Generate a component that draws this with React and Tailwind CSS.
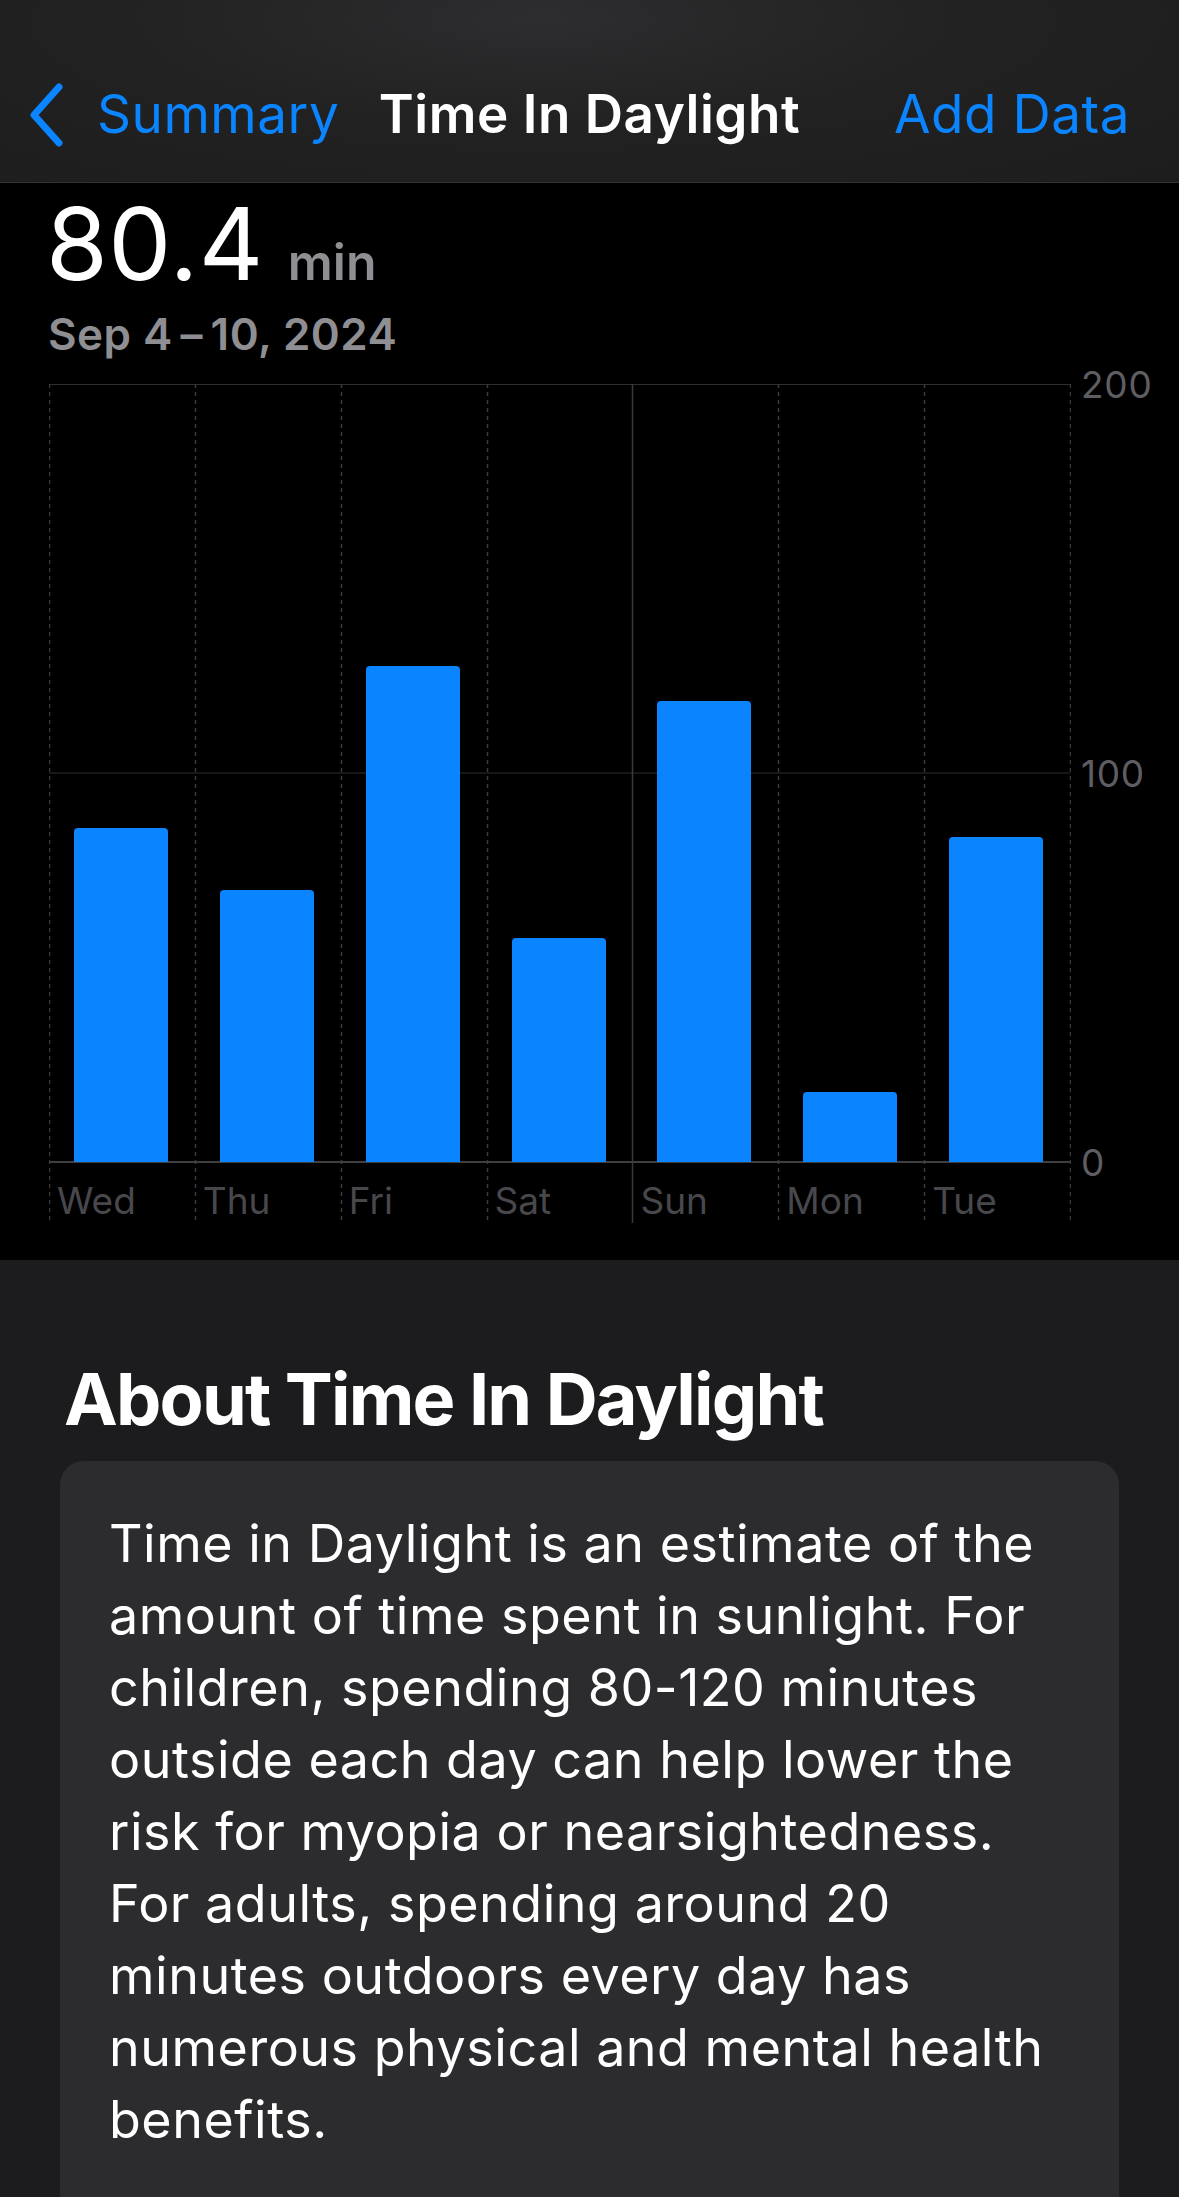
import React from "react";

const days = [
  { label: "Wed", value: 85.8 },
  { label: "Thu", value: 69.9 },
  { label: "Fri", value: 127.6 },
  { label: "Sat", value: 57.7 },
  { label: "Sun", value: 118.6 },
  { label: "Mon", value: 18 },
  { label: "Tue", value: 83.6 },
];

const MAX = 200;
const PLOT_W = 1021;
const PLOT_H = 778;
const CHART_H = 839;

const ChartGrid = () => {
  const col = PLOT_W / 7;
  return (
    <svg
      className="absolute left-0 top-0"
      width={PLOT_W + 1}
      height={CHART_H}
      viewBox={`0 0 ${PLOT_W + 1} ${CHART_H}`}
    >
      <line x1="0" y1="0.5" x2={PLOT_W} y2="0.5" stroke="#2f2f31" strokeWidth="1" />
      <line x1="0" y1={PLOT_H / 2} x2={PLOT_W} y2={PLOT_H / 2} stroke="#2f2f31" strokeWidth="1" />
      {Array.from({ length: 8 }).map((_, i) => {
        const x = Math.min(Math.round(i * col) + 0.5, PLOT_W + 0.5);
        return i === 4 ? (
          <line key={i} x1={x} y1="0" x2={x} y2={CHART_H} stroke="#3a3a3c" strokeWidth="1.5" />
        ) : (
          <line
            key={i}
            x1={x}
            y1="0"
            x2={x}
            y2={CHART_H}
            stroke="#3a3a3c"
            strokeWidth="1.5"
            strokeDasharray="4 4"
          />
        );
      })}
      <line x1="0" y1={PLOT_H} x2={PLOT_W} y2={PLOT_H} stroke="#3f3f42" strokeWidth="2" />
    </svg>
  );
};

const App = () => {
  return (
    <div
      className="min-h-[2197px] w-full bg-[#1c1c1e] text-white"
      style={{ fontFamily: "Inter, 'Noto Sans', sans-serif" }}
    >
      {/* nav bar */}
      <div className="h-[183px] border-b border-[#323234] bg-[radial-gradient(ellipse_at_46%_10%,#2d2d2f_0%,#222223_45%,#1d1d1e_100%)] pt-[74px]">
        <div className="grid h-[82px] grid-cols-[1fr_auto_1fr] items-center">
          <div className="flex items-center pl-[28px]">
            <svg width="36" height="64" viewBox="0 0 36 64" fill="none">
              <polyline
                points="31,4 6,32 31,60"
                stroke="#0a84ff"
                strokeWidth="7"
                strokeLinecap="round"
                strokeLinejoin="round"
              />
            </svg>
            <span className="ml-[33px] text-[53px] tracking-[0.01em] text-[#0a84ff]">Summary</span>
          </div>
          <div className="text-[53px] font-semibold tracking-[0.01em]">Time In Daylight</div>
          <div className="pr-[49px] text-right text-[53px] tracking-[0.01em] text-[#0a84ff]">
            Add Data
          </div>
        </div>
      </div>

      {/* chart section */}
      <div className="bg-black pb-[37px] pt-[11px]">
        <div className="flex items-baseline pl-[46px]">
          <span className="text-[100px] leading-none tracking-[0.005em]">80.4</span>
          <span className="ml-[24px] text-[50px] font-semibold leading-none text-[#8e8e93]">min</span>
        </div>
        <div className="mt-[18px] pl-[48px] text-[44px] font-semibold leading-none tracking-[0.01em] text-[#8e8e93]">
          Sep 4{"\u2009"}–{"\u2009"}10, 2024
        </div>

        <div className="mt-[28px] flex pl-[49px]">
          <div className="relative w-[1021px]" style={{ height: CHART_H }}>
            <ChartGrid />
            <div className="relative grid h-[778px] grid-cols-7 items-end">
              {days.map((d) => (
                <div key={d.label} className="flex h-full items-end pl-[25px]">
                  <div
                    className="w-[94px] rounded-t-[4px] bg-[#0a84ff]"
                    style={{ height: `${(d.value / MAX) * 100}%` }}
                  />
                </div>
              ))}
            </div>
            <div className="relative grid grid-cols-7 pt-[20px]">
              {days.map((d) => (
                <div key={d.label} className="pl-[8px] text-[37px] leading-none text-[#48484c]">
                  {d.label}
                </div>
              ))}
            </div>
          </div>
          <div className="relative h-[778px] flex-1 text-[37px] leading-none tracking-[0.02em] text-[#5e5e62]">
            <span className="absolute left-[11px] top-0 -translate-y-1/2">200</span>
            <span className="absolute left-[11px] top-1/2 -translate-y-1/2">100</span>
            <span className="absolute left-[11px] top-full -translate-y-1/2">0</span>
          </div>
        </div>
      </div>

      {/* about section */}
      <div className="pt-[103px]">
        <h2 className="pl-[64px] text-[72px] font-bold leading-none tracking-[-0.025em]">
          About Time In Daylight
        </h2>
        <div className="mx-[60px] mt-[26px] rounded-[24px] bg-[#2c2c2e] pb-[120px] pl-[49px] pr-[40px] pt-[47px]">
          <p className="text-[52px] leading-[72px] tracking-[0.01em] text-white">
            Time in Daylight is an estimate of the amount of time spent in sunlight. For children,
            spending 80-120 minutes outside each day can help lower the risk for myopia or
            nearsightedness. For adults, spending around 20 minutes outdoors every day has numerous
            physical and mental health benefits.
          </p>
        </div>
      </div>
    </div>
  );
};

export default App;
